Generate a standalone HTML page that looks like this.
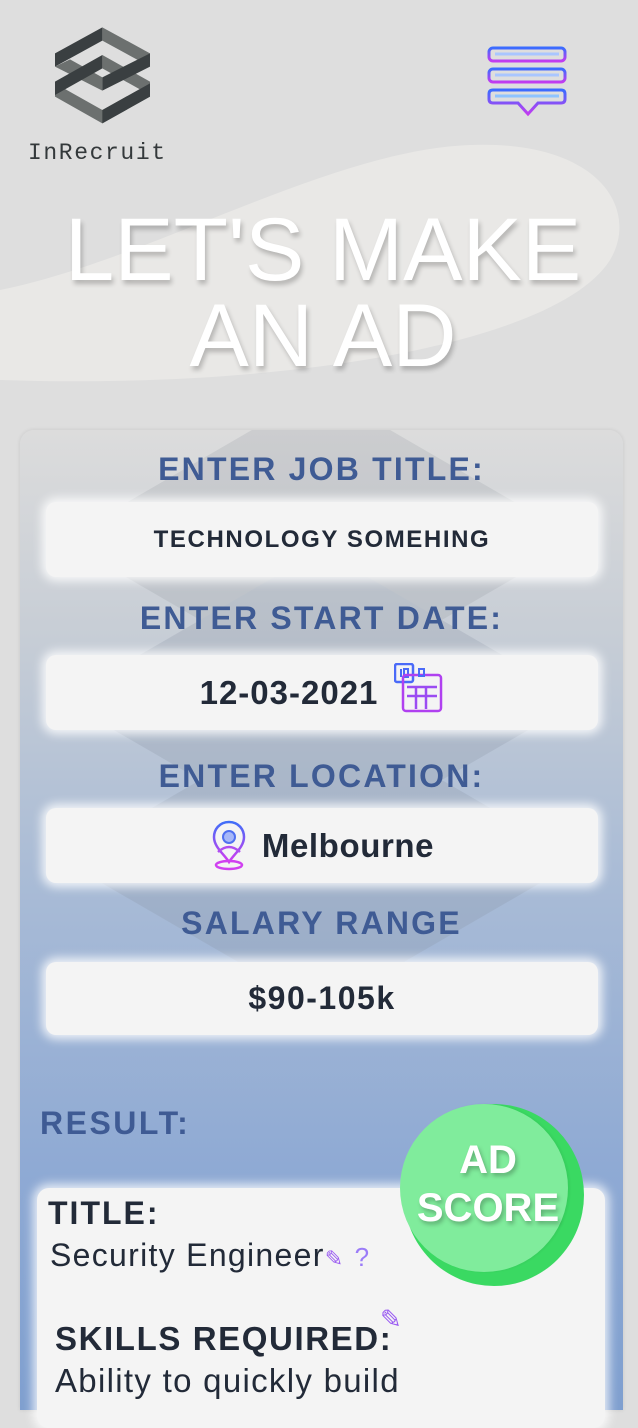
<!DOCTYPE html>
<html><head><meta charset="utf-8"><style>
*{margin:0;padding:0;box-sizing:border-box}
body{width:638px;height:1392px;overflow:hidden;background:#dedede;font-family:"Liberation Sans",Arial,sans-serif;position:relative}
.abs{position:absolute}
.lbl{position:absolute;left:20px;width:603px;text-align:center;color:#3f5b94;font-weight:bold;font-size:32px;letter-spacing:2.2px}
.inp{position:absolute;left:46px;width:552px;height:75px;background:#f4f4f4;border-radius:10px;box-shadow:0 0 10px 4px rgba(255,255,255,.85);display:flex;align-items:center;justify-content:center;color:#222a38;font-weight:bold}
</style></head><body>
<svg class="abs" style="left:0;top:0" width="638" height="420">
<path d="M0 290 C150 260 330 150 470 145 C600 140 640 210 610 260 C560 340 300 390 0 380 Z" fill="#e9e8e6"/>
</svg>
<!-- logo -->
<svg class="abs" style="left:40px;top:20px" width="130" height="110" viewBox="0 0 390 330">
<polygon points="187,22 330,100 330,140 187,62" fill="#6c706f"/>
<polygon points="45,100 187,22 187,62 45,140" fill="#3a3f41"/>
<polygon points="45,140 90,118 187,172 187,212" fill="#6c706f"/>
<polygon points="187,105 330,185 330,225 187,145" fill="#6c706f"/>
<polygon points="45,190 187,270 330,190 330,230 187,310 45,230" fill="#6c706f"/>
<polygon points="187,270 330,190 330,230 187,310" fill="#3a3f41"/>
<polygon points="45,185 187,105 187,145 45,225" fill="#3a3f41"/>
<polygon points="187,172 330,100 330,140 187,212" fill="#3a3f41"/>
</svg>
<div class="abs" style="left:28px;top:140px;font-family:'Liberation Mono',monospace;font-size:23px;color:#34393b;letter-spacing:1.6px">InRecruit</div>
<!-- menu icon -->
<svg class="abs" style="left:486px;top:44px" width="82" height="74" viewBox="0 0 82 74">
<defs><linearGradient id="g" x1="0" y1="0" x2="0" y2="1"><stop offset="0" stop-color="#3a6cff"/><stop offset="1" stop-color="#c23cf0"/></linearGradient></defs>
<rect x="3" y="4" width="76" height="13" rx="4" fill="none" stroke="url(#g)" stroke-width="3"/>
<rect x="3" y="25" width="76" height="13" rx="4" fill="none" stroke="url(#g)" stroke-width="3"/>
<path d="M7 46 H75 Q79 46 79 50 V55 Q79 59 75 59 H52 L42 70 L32 59 H7 Q3 59 3 55 V50 Q3 46 7 46 Z" fill="none" stroke="url(#g)" stroke-width="3"/>
<line x1="9" y1="10" x2="73" y2="10" stroke="#a9c6ff" stroke-width="3"/>
<line x1="9" y1="31" x2="73" y2="31" stroke="#a9c6ff" stroke-width="3"/>
<line x1="9" y1="52" x2="73" y2="52" stroke="#8fc4ff" stroke-width="3"/>
</svg>
<div class="abs" style="left:0;top:206px;width:646px;text-align:center;color:#fff;font-size:89px;line-height:86px;text-shadow:2px 4px 5px rgba(0,0,0,.22)">LET'S MAKE<br>AN AD</div>
<!-- card -->
<div class="abs" style="left:20px;top:430px;width:603px;height:980px;border-radius:14px 14px 0 0;background:linear-gradient(#dcdcdc 0%,#c8ced6 20%,#aabcd6 45%,#8faad4 75%,#7f9fcf 100%);box-shadow:0 0 4px rgba(0,0,0,.1);overflow:hidden">
<svg class="abs" style="left:0;top:-40px" width="603" height="600" opacity=".25">
<polygon points="301,0 560,150 301,300 42,150" fill="#9aa0a6"/>
<polygon points="301,160 560,310 301,460 42,310" fill="#8a95a6"/>
<polygon points="301,320 560,470 301,620 42,470" fill="#8a95a6"/>
</svg>
</div>
<div class="lbl" style="top:451px">ENTER JOB TITLE:</div>
<div class="inp" style="top:502px;font-size:24px;letter-spacing:1.6px">TECHNOLOGY SOMEHING</div>
<div class="lbl" style="top:600px">ENTER START DATE:</div>
<div class="inp" style="top:655px;font-size:33px;letter-spacing:1px">12-03-2021<svg style="margin-left:16px;margin-top:-8px" width="50" height="52" viewBox="0 0 50 52"><rect x="1" y="1" width="18" height="18" rx="2" fill="none" stroke="#4a6af8" stroke-width="2.5"/><line x1="7" y1="6" x2="7" y2="14" stroke="#4a6af8" stroke-width="2"/><rect x="10" y="6" width="4" height="8" fill="none" stroke="#4a6af8" stroke-width="2"/><rect x="9" y="12" width="38" height="36" rx="3" fill="none" stroke="#b040f0" stroke-width="2.5"/><path d="M13 24 H43 M13 33 H43 M22 24 V46 M32 24 V46" stroke="#9b4cf2" stroke-width="2.5"/><rect x="25" y="6" width="5" height="7" fill="none" stroke="#4a6af8" stroke-width="2"/></svg></div>
<div class="lbl" style="top:758px">ENTER LOCATION:</div>
<div class="inp" style="top:808px;font-size:33px;letter-spacing:.6px"><svg style="margin-right:14px" width="38" height="52" viewBox="0 0 34 52"><defs><linearGradient id="p" x1="0" y1="0" x2="0" y2="1"><stop offset="0" stop-color="#3f6ef8"/><stop offset="1" stop-color="#d23cf0"/></linearGradient></defs><path d="M17 2 C7 2 2 10 2 17 C2 27 12 34 17 42 C22 34 32 27 32 17 C32 10 27 2 17 2Z" fill="none" stroke="url(#p)" stroke-width="2.5"/><circle cx="17" cy="17" r="6" fill="#a7b8f8" stroke="#5070f0" stroke-width="2"/><path d="M6 32 Q17 22 28 32" fill="none" stroke="#b04ef0" stroke-width="2.5"/><ellipse cx="17" cy="45" rx="13" ry="4" fill="none" stroke="#d040f0" stroke-width="2.5"/></svg>Melbourne</div>
<div class="lbl" style="top:905px">SALARY RANGE</div>
<div class="inp" style="top:962px;height:73px;font-size:32px;letter-spacing:1.5px">$90-105k</div>
<div class="abs" style="left:40px;top:1105px;color:#3f5b94;font-weight:bold;font-size:32px;letter-spacing:2.5px">RESULT:</div>
<div class="abs" style="left:37px;top:1188px;width:568px;height:240px;background:#f4f4f4;border-radius:12px;box-shadow:0 0 10px 4px rgba(255,255,255,.8)"></div>
<div class="abs" style="left:48px;top:1195px;color:#222a38;font-weight:bold;font-size:32px;letter-spacing:2px">TITLE:</div>
<div class="abs" style="left:50px;top:1237px;color:#222a38;font-size:32px;letter-spacing:1.3px">Security Engineer<span style="color:#9b5cf2;font-size:22px">✎</span> <span style="color:#9b7cf8;font-size:26px">?</span></div>
<div class="abs" style="left:55px;top:1320px;color:#222a38;font-weight:bold;font-size:33px;letter-spacing:1.6px">SKILLS REQUIRED:</div>
<div class="abs" style="left:380px;top:1304px;color:#9b5cf2;font-size:26px">✎</div>
<div class="abs" style="left:55px;top:1362px;color:#222a38;font-size:33px;letter-spacing:1.3px">Ability to quickly build</div>
<div class="abs" style="left:404px;top:1104px;width:180px;height:182px;border-radius:50%;background:#3ad962"></div>
<div class="abs" style="left:400px;top:1104px;width:168px;height:168px;border-radius:50%;background:#80ec9c;box-shadow:2px 0 2px rgba(0,0,0,.05)"></div>
<div class="abs" style="left:400px;top:1136px;width:176px;text-align:center;color:#fff;font-weight:bold;font-size:40px;line-height:48px;text-shadow:2px 3px 4px rgba(0,0,0,.25)">AD<br>SCORE</div>
</body></html>
